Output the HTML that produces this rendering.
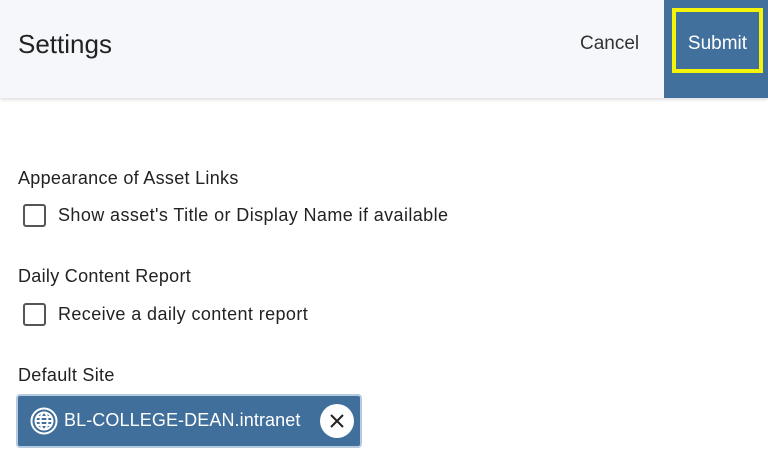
<!DOCTYPE html>
<html><head><style>
body{margin:0;width:768px;height:476px;background:#fff;font-family:"Liberation Sans",sans-serif;color:#222;position:relative;overflow:hidden}
.hdr{position:absolute;left:0;top:0;width:768px;height:98px;background:#f5f7fa;box-shadow:0 2px 3px rgba(0,0,0,.12)}
.t{position:absolute;left:18px;top:29px;font-size:26px;color:#222}
.cancel{position:absolute;left:580px;top:33px;font-size:19px;color:#333}
.sub{position:absolute;left:664px;top:0;width:104px;height:98px;background:#40709b}
.sb{position:absolute;left:672px;top:8px;width:83px;height:57px;border:4px solid #f4f40a;color:#fff;font-size:19px;text-align:center;line-height:63px}
.l{position:absolute;left:18px;font-size:18px;letter-spacing:.3px}
.cb{position:absolute;left:23px;width:19px;height:19px;border:2px solid #555;border-radius:3px}
.ct{position:absolute;left:58px;font-size:18px;letter-spacing:.4px}
.chip{position:absolute;left:16px;top:394px;width:342px;height:50px;background:#3f6f9a;border:2px solid #b6cbe0;border-radius:4px;color:#fff}
.chip span{position:absolute;left:46px;top:14px;font-size:18px;letter-spacing:.1px}
.x{position:absolute;left:302px;top:8px;width:34px;height:34px;border-radius:50%;background:#fff}
</style></head><body>
<div class="hdr"><div class="t">Settings</div><div class="cancel">Cancel</div><div class="sub"></div><div class="sb">Submit</div></div>
<div class="l" style="top:168px">Appearance of Asset Links</div>
<div class="cb" style="top:204px"></div><div class="ct" style="top:205px">Show asset's Title or Display Name if available</div>
<div class="l" style="top:266px">Daily Content Report</div>
<div class="cb" style="top:303px"></div><div class="ct" style="top:304px">Receive a daily content report</div>
<div class="l" style="top:365px">Default Site</div>
<div class="chip">
<svg style="position:absolute;left:12px;top:11px" width="28" height="28" viewBox="0 0 28 28" fill="none" stroke="#fff" stroke-width="2"><circle cx="14" cy="14" r="12.5"/><circle cx="14" cy="14" r="8.5"/><ellipse cx="14" cy="14" rx="3.5" ry="8.5"/><path d="M5.5 14h17M7 10h14M7 18h14"/></svg>
<span>BL-COLLEGE-DEAN.intranet</span>
<div class="x"><svg width="34" height="34" viewBox="0 0 34 34" stroke="#222" stroke-width="2"><path d="M11 11l12 12M23 11l-12 12"/></svg></div>
</div>
</body></html>
